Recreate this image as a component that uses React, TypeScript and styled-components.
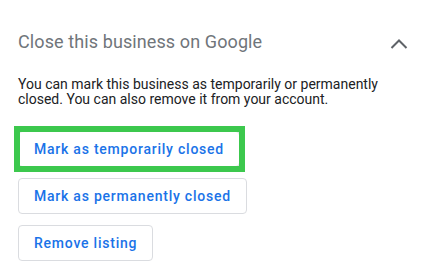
import React from "react";
import styled, { createGlobalStyle } from "styled-components";

const Global = createGlobalStyle`
  html, body { margin: 0; padding: 0; background: #fff; }
  body { font-family: Roboto, "Noto Sans", Arial, sans-serif; -webkit-font-smoothing: antialiased; }
`;

const Panel = styled.section`
  width: 428px;
  height: 275px;
  box-sizing: border-box;
  padding: 28px 18px 0 18px;
  display: flex;
  flex-direction: column;
`;

const Header = styled.div`
  display: flex;
  align-items: center;
  justify-content: space-between;
  height: 28px;
`;

const Title = styled.h2`
  margin: 0;
  font-family: Roboto, "Open Sans", Arial, sans-serif;
  font-weight: 400;
  font-size: 18px;
  letter-spacing: 0.1px;
  line-height: 28px;
  color: #70757a;
`;

const Toggle = styled.button`
  border: 0;
  background: none;
  padding: 0;
  margin: 4px 0 0 0;
  width: 22px;
  height: 24px;
  display: flex;
  align-items: center;
  justify-content: center;
  cursor: pointer;
`;

const Description = styled.p`
  margin: 21px 0 0 0;
  font-size: 14px;
  line-height: 15px;
  color: #202124;
`;

const Actions = styled.div`
  margin-top: 24px;
  display: flex;
  flex-direction: column;
  align-items: flex-start;
  gap: 11px;
`;

const ActionButton = styled.button<{ $highlight?: boolean }>`
  position: relative;
  box-sizing: border-box;
  height: 36px;
  padding: 0 15px;
  border: 1px solid #dadce0;
  border-radius: 4px;
  background: #fff;
  color: #1a73e8;
  font-family: Roboto, Arial, sans-serif;
  font-weight: 500;
  font-size: 14px;
  letter-spacing: 0.77px;
  cursor: pointer;
  &::after {
    content: "";
    display: ${(p) => (p.$highlight ? "block" : "none")};
    position: absolute;
    inset: -6px -6px -6px -5px;
    border: 6px solid #3cc84d;
    pointer-events: none;
  }
`;

function ChevronUp() {
  return (
    <svg width="18" height="12" viewBox="0 0 18 12" aria-hidden="true">
      <polyline points="1.5,10 9,2.5 16.5,10" fill="none" stroke="#5f6368" strokeWidth="2" />
    </svg>
  );
}

export default function App() {
  return (
    <>
      <Global />
      <Panel>
        <Header>
          <Title>Close this business on Google</Title>
          <Toggle aria-label="Collapse">
            <ChevronUp />
          </Toggle>
        </Header>
        <Description>
          You can mark this business as temporarily or permanently
          <br />
          closed. You can also remove it from your account.
        </Description>
        <Actions>
          <ActionButton $highlight>Mark as temporarily closed</ActionButton>
          <ActionButton>Mark as permanently closed</ActionButton>
          <ActionButton>Remove listing</ActionButton>
        </Actions>
      </Panel>
    </>
  );
}
